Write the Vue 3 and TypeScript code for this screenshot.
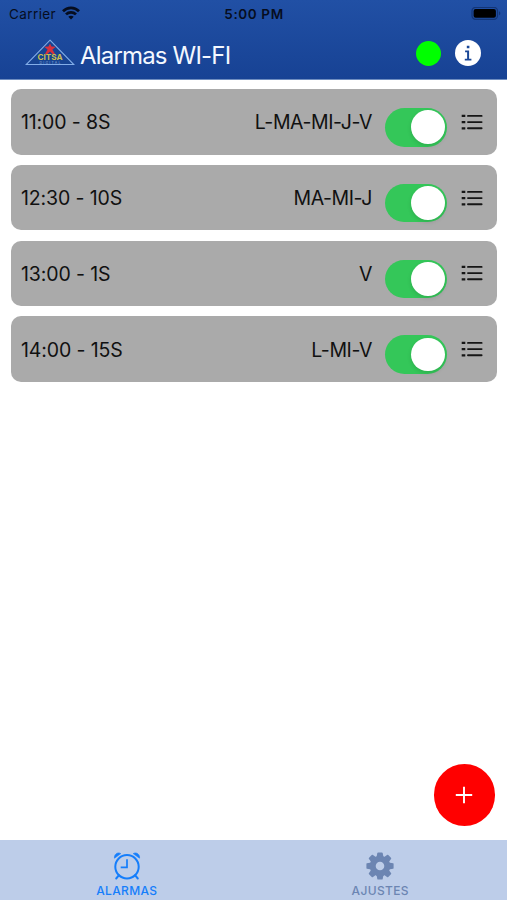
<script setup lang="ts">
import { ref } from 'vue'

interface Alarm {
  time: string
  seconds: number
  days: string
  enabled: boolean
}

const alarms = ref<Alarm[]>([
  { time: '11:00', seconds: 8, days: 'L-MA-MI-J-V', enabled: true },
  { time: '12:30', seconds: 10, days: 'MA-MI-J', enabled: true },
  { time: '13:00', seconds: 1, days: 'V', enabled: true },
  { time: '14:00', seconds: 15, days: 'L-MI-V', enabled: true },
])
const gearAngles = [0, 45, 90, 135, 180, 225, 270, 315]
</script>

<template>
  <div class="screen">
    <header class="header">
      <div class="status">
        <div class="carrier">
          <span>Carrier</span>
          <svg class="wifi" viewBox="0 0 18 14" fill="none" stroke="#060d1e" stroke-width="2.7">
            <path d="M1 5.2C5.4.7 12.6.7 17 5.2" />
            <path d="M4 8.4c2.8-2.8 7.2-2.8 10 0" />
            <path d="M9 13.5 6.3 10.7c1.5-1.4 3.9-1.4 5.4 0z" fill="#060d1e" stroke="none" />
          </svg>
        </div>
        <span class="clock">5:00 PM</span>
        <svg class="battery" viewBox="0 0 30 14">
          <rect x="1" y=".3" width="25.5" height="12" rx="3.6" fill="none" stroke="#133576" stroke-width="1.2" />
          <rect x="2.6" y="1.9" width="22.3" height="8.8" rx="2" fill="#000" />
          <path d="M28 4.3c1.8.6 1.8 3.4 0 4z" fill="#133576" />
        </svg>
      </div>
      <div class="navbar">
        <svg class="logo" viewBox="0 0 50 28">
          <path d="M25 1.2 48.8 25.5H1.2z" fill="#174493" stroke="#83aee9" stroke-width="1.1" />
          <path d="m25 4.6 1.5 3 4.3.2-3.4 2.6 2.6 4.6h-2.4L25 12.5 22.4 15H20l2.6-4.6-3.4-2.6 4.3-.2z" fill="#d7303c" />
          <text class="logo-name" x="12.6" y="21.4" textLength="25">CITSA</text>
          <text class="logo-sub" x="14.5" y="25" textLength="21">DIGITAL</text>
        </svg>
        <h1 class="title">Alarmas WI-FI</h1>
        <span class="online"></span>
        <button class="info" aria-label="Info">
          <svg viewBox="0 0 26 26">
            <circle cx="13" cy="13" r="13" fill="#fff" />
            <path d="M11.8 5.7h2.6v2.6h-2.6zM10.1 10.6h4v8.2h2.3v1.7H9.8v-1.7h2.3v-6.5h-2z" fill="#1a4797" />
          </svg>
        </button>
      </div>
    </header>

    <main class="list">
      <article v-for="alarm in alarms" :key="alarm.time" class="card">
        <span class="time">{{ alarm.time }} - {{ alarm.seconds }}S</span>
        <span class="days">{{ alarm.days }}</span>
        <button
          class="toggle"
          :class="{ on: alarm.enabled }"
          role="switch"
          :aria-checked="alarm.enabled"
          @click="alarm.enabled = !alarm.enabled"
        >
          <span class="knob"></span>
        </button>
        <svg class="menu" viewBox="0 0 22 18" stroke="#161616" stroke-width="2">
          <path d="M.7 2.9h3.6M.7 9.1h3.6M.7 15.3h3.6" stroke-width="2.3" />
          <path d="M7 2.9h13.6M7 9.1h13.6M7 15.3h13.6" stroke-linecap="round" stroke-width="1.9" />
        </svg>
      </article>
    </main>

    <button class="add" aria-label="Añadir">
      <svg viewBox="0 0 18 18" fill="none" stroke="#fff" stroke-width="1.9">
        <path d="M9 .8v16.4M.8 9h16.4" />
      </svg>
    </button>

    <nav class="tabs">
      <div class="tab active">
        <svg class="tab-icon" viewBox="0 0 28 28" fill="none" stroke="currentColor">
          <circle cx="14" cy="14.7" r="11.7" stroke-width="2" />
          <path d="M14 7.3v8.1H7.7" stroke-width="1.7" />
          <path d="m6 23.2-2.8 3.3M22 23.2l2.8 3.3" stroke-width="2" stroke-linecap="round" />
          <path d="M1.5 6.2C.6 2.8 4.6-.5 7.8 1.6zM26.5 6.2c.9-3.4-3.1-6.7-6.3-4.6z" fill="currentColor" stroke-width=".6" />
        </svg>
        <span>ALARMAS</span>
      </div>
      <div class="tab">
        <svg class="tab-icon" viewBox="0 0 28 28">
          <g fill="currentColor">
            <path
              v-for="angle in gearAngles"
              :key="angle"
              d="M10.5 5.5 11.3.9Q11.5.4 12.1.4h3.8q.6 0 .8.5l.8 4.6z"
              :transform="`rotate(${angle} 14 14)`"
            />
          </g>
          <circle cx="14" cy="14" r="7.3" fill="none" stroke="currentColor" stroke-width="6" />
        </svg>
        <span>AJUSTES</span>
      </div>
    </nav>
  </div>
</template>

<style>
body {
  margin: 0;
  background: #fff;
}
</style>

<style scoped>
.screen {
  display: flex;
  flex-direction: column;
  position: relative;
  height: 900px;
  overflow: hidden;
  font-family: Inter, 'Liberation Sans', sans-serif;
  color: #111;
}
button {
  border: 0;
  padding: 0;
  background: none;
}
svg {
  display: block;
}
.header {
  box-sizing: border-box;
  height: 79.5px;
  flex: none;
  background: linear-gradient(#2150a5, #174294);
  border-bottom: 1px solid #6e8dc0;
}
.status {
  display: grid;
  grid-template-columns: 1fr auto 1fr;
  align-items: center;
  height: 27px;
  padding: 0 6px 0 9px;
  color: #060d1e;
  font-size: 13.5px;
}
.carrier {
  display: flex;
  align-items: center;
  gap: 6px;
  letter-spacing: 0.4px;
}
.wifi {
  width: 18px;
  height: 14px;
  margin-top: -2px;
}
.clock {
  margin-right: 2px;
  font-weight: 600;
  letter-spacing: 0.6px;
}
.battery {
  justify-self: end;
  width: 30px;
  height: 14px;
}
.navbar {
  display: flex;
  align-items: center;
  height: 52px;
  padding: 0 26px 0 25px;
}
.logo {
  width: 50px;
  height: 28px;
}
.logo-name {
  font-size: 8.2px;
  font-weight: 700;
  fill: #cbbd4f;
}
.logo-sub {
  font-size: 3.6px;
  fill: #8cabdc;
}
.title {
  margin: 5px 0 0 5px;
  color: #f4f8ff;
  font-size: 24px;
  font-weight: 400;
  line-height: 30px;
  letter-spacing: -0.82px;
  white-space: nowrap;
}
.online {
  width: 25px;
  height: 25px;
  margin-left: auto;
  border-radius: 50%;
  background: #0f0;
}
.info {
  width: 26px;
  height: 26px;
  margin: -1px 0 0 14px;
}
.list {
  display: flex;
  flex: 1;
  flex-direction: column;
  gap: 10.2px;
  padding: 9.5px 10px 0 11px;
}
.card {
  box-sizing: border-box;
  display: flex;
  flex: none;
  align-items: center;
  height: 65.6px;
  padding: 0 14px 0 10px;
  border-radius: 10px;
  background: #aaa;
  font-size: 19.5px;
}
.time,
.days {
  padding-top: 1px;
}
.time {
  letter-spacing: -0.12px;
}
.days {
  margin-left: auto;
  letter-spacing: -0.42px;
}
.toggle {
  box-sizing: border-box;
  display: flex;
  width: 62.5px;
  height: 38.5px;
  margin: 11px 0 0 12.5px;
  padding: 2.3px;
  border-radius: 20px;
  background: #e9e9eb;
}
.toggle.on {
  justify-content: flex-end;
  background: #34c759;
}
.knob {
  width: 33.8px;
  height: 33.8px;
  border-radius: 50%;
  background: #fff;
  box-shadow: 0 2px 4px rgba(0, 0, 0, 0.12);
}
.menu {
  width: 22px;
  height: 18px;
  margin-left: 14px;
}
.add {
  position: absolute;
  right: 12px;
  bottom: 74.5px;
  display: grid;
  place-items: center;
  width: 61.5px;
  height: 61.5px;
  border-radius: 50%;
  background: #f00;
}
.add svg {
  width: 18px;
  height: 18px;
}
.tabs {
  display: grid;
  grid-template-columns: 1fr 1fr;
  flex: none;
  height: 60.5px;
  background: #bdcde9;
}
.tab {
  display: flex;
  flex-direction: column;
  align-items: center;
  padding-top: 12px;
  color: #6c85b2;
  font-size: 12px;
  font-weight: 500;
  line-height: 15px;
  letter-spacing: 0.35px;
}
.tab.active {
  color: #157efb;
}
.tab-icon {
  width: 28px;
  height: 28px;
  margin-bottom: 3.5px;
}
</style>
